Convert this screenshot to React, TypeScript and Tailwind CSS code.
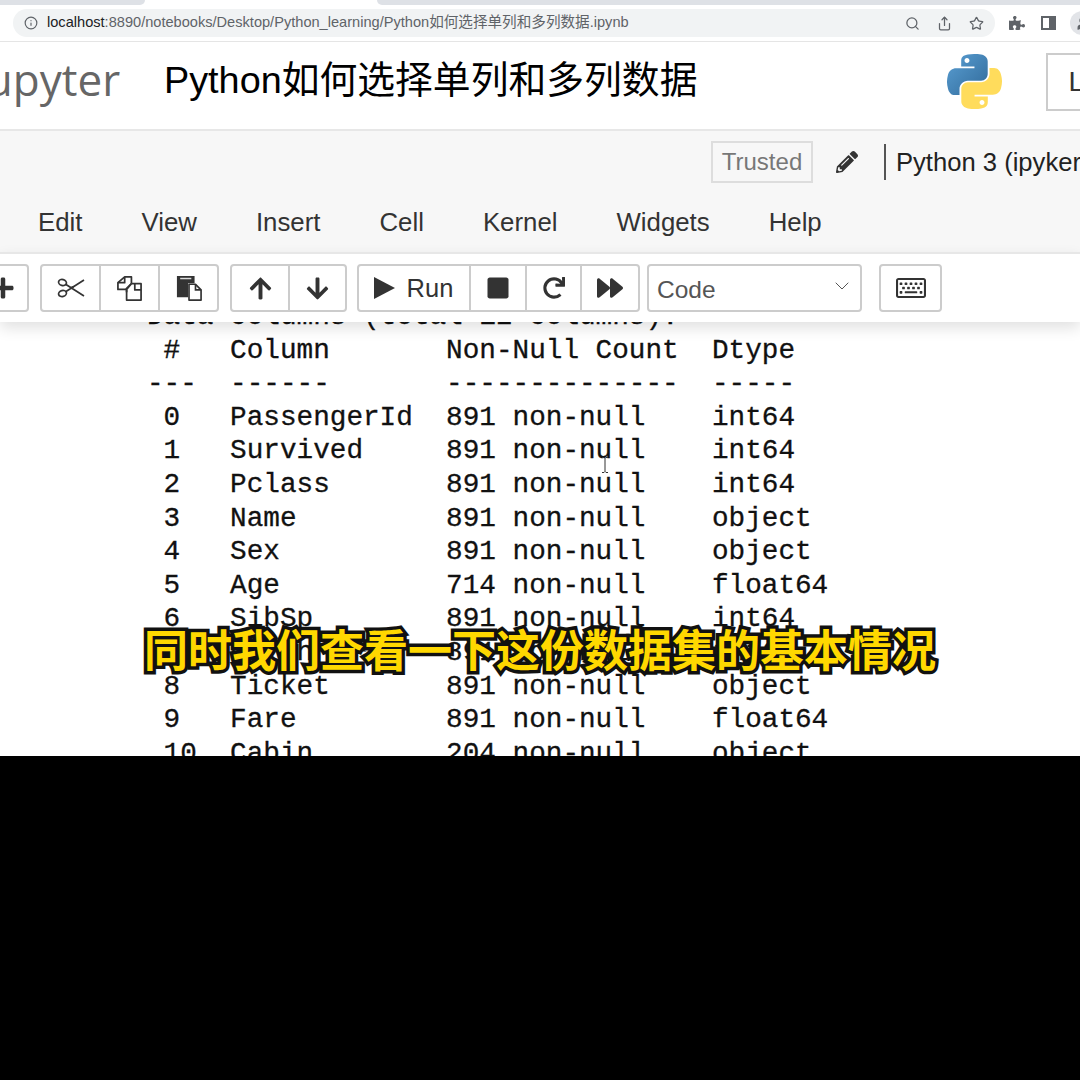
import { Info, Search, Share, Star, ChevronDown, User } from "lucide-react";
import {
  FaPlus,
  FaArrowUp,
  FaArrowDown,
  FaStop,
  FaRedo,
  FaForward,
  FaRegKeyboard,
  FaPuzzlePiece,
  FaPencilAlt,
} from "react-icons/fa";

const sans = "font-['Liberation_Sans','Noto_Sans_CJK_SC',sans-serif]";

const codeText = `Data columns (total 12 columns):
 #   Column       Non-Null Count  Dtype
---  ------       --------------  -----
 0   PassengerId  891 non-null    int64
 1   Survived     891 non-null    int64
 2   Pclass       891 non-null    int64
 3   Name         891 non-null    object
 4   Sex          891 non-null    object
 5   Age          714 non-null    float64
 6   SibSp        891 non-null    int64
 7   Parch        891 non-null    int64
 8   Ticket       891 non-null    object
 9   Fare         891 non-null    float64
 10  Cabin        204 non-null    object`;

const logoPath =
  "M54.9 0C50.3 0 46 .4 42.1 1.1 30.8 3.1 28.7 7.3 28.7 15v10.3h26.8v3.4H18.6c-7.8 0-14.6 4.7-16.7 13.6-2.5 10.2-2.6 16.6 0 27.2 1.9 7.9 6.4 13.6 14.2 13.6h9.2V70.8c0-8.8 7.7-16.6 16.8-16.6h26.8c7.5 0 13.4-6.1 13.4-13.6V15c0-7.3-6.1-12.7-13.4-13.9C64.3.3 59.5 0 54.9 0zM40.4 8.2c2.8 0 5 2.3 5 5.1 0 2.8-2.2 5.1-5 5.1-2.8 0-5-2.3-5-5.1 0-2.8 2.2-5.1 5-5.1z";

function PythonLogo() {
  return (
    <svg viewBox="0 0 111.2 111.2" className="w-[55px] h-[55px] shrink-0">
      <defs>
        <linearGradient id="py-blue" x1="0%" y1="0%" x2="100%" y2="100%">
          <stop offset="0%" stopColor="#5a9fd4" />
          <stop offset="100%" stopColor="#306998" />
        </linearGradient>
      </defs>
      <path d={logoPath} fill="url(#py-blue)" />
      <path d={logoPath} fill="#ffdc5c" transform="rotate(180 55.6 55.6)" />
    </svg>
  );
}

function ScissorsIcon() {
  return (
    <svg viewBox="0 0 28 20" className="w-[28px] h-[20px]" fill="none" stroke="#333" strokeWidth="1.7">
      <ellipse cx="5.5" cy="4.5" rx="4" ry="3" transform="rotate(15 5.5 4.5)" />
      <ellipse cx="5.5" cy="15.5" rx="4" ry="3" transform="rotate(-15 5.5 15.5)" />
      <path d="M9 6.5 27 18M9 13.5 27 2" />
      <path d="M13 9l5 -1.5-2 3z" fill="#333" stroke="none" />
    </svg>
  );
}

function CopyIcon() {
  return (
    <svg viewBox="0 0 28 28" className="w-[27px] h-[27px]" fill="none" stroke="#333" strokeWidth="1.8" strokeLinejoin="round">
      <path d="M9 2h7v7l-6 6H2V8z" />
      <path d="M9 2v6H2" />
      <path d="M16 9h10v17H11V15" fill="#fff" />
      <path d="M19.5 9v6.5H26M16 9l-5 6v3" />
    </svg>
  );
}

function PasteIcon() {
  return (
    <svg viewBox="0 0 28 28" className="w-[26px] h-[26px]">
      <path d="M1 1h19v8h-7v15H1z" fill="#333" />
      <rect x="4.5" y="3" width="12" height="1.6" fill="#ddd" />
      <path d="M14 10h7l6 6v11H14z" fill="#fff" stroke="#333" strokeWidth="1.8" strokeLinejoin="round" />
      <path d="M21 10v6h6" fill="none" stroke="#333" strokeWidth="1.8" />
    </svg>
  );
}

function ToolButton({ w, children, last }: { w: string; children: React.ReactNode; last?: boolean }) {
  return (
    <div className={`${w} h-full flex items-center justify-center shrink-0 text-[#333] ${last ? "" : "border-r-2 border-[#ccc]"}`}>
      {children}
    </div>
  );
}

function Group({ children, className }: { children: React.ReactNode; className?: string }) {
  return (
    <div className={`h-[48px] flex items-stretch shrink-0 border-2 border-[#ccc] rounded-[4px] bg-white ${className ?? ""}`}>
      {children}
    </div>
  );
}

export default function App() {
  return (
    <div className={`w-[1080px] h-[1080px] bg-black overflow-hidden ${sans}`}>
      <div className="relative h-[756px] bg-white overflow-hidden">
        {/* browser chrome */}
        <div className="h-[5px] flex bg-white">
          <div className="w-[145px] bg-[#dee1e6] rounded-br-[8px]" />
          <div className="w-[232px]" />
          <div className="flex-1 bg-[#dee1e6] rounded-bl-[8px]" />
        </div>
        <div className="h-[37px] flex items-center pl-[13px] border-b border-[#e5e5e5]">
          <div className="w-[982px] h-[28px] shrink-0 rounded-full bg-[#f1f3f4] flex items-center pl-[11px] pr-[11px]">
            <Info size={14} className="text-[#5f6368] mr-[9px] shrink-0" />
            <span className="text-[14.6px] text-[#5f6368] whitespace-nowrap">
              <span className="text-[#202124]">localhost</span>:8890/notebooks/Desktop/Python_learning/Python如何选择单列和多列数据.ipynb
            </span>
            <div className="ml-auto flex items-center gap-[17px] text-[#5f6368]">
              <Search size={15} />
              <Share size={15} />
              <Star size={15} />
            </div>
          </div>
          <FaPuzzlePiece size={16} className="ml-[14px] text-[#5f6368] shrink-0" />
          <div className="ml-[16px] w-[15px] h-[14px] border-2 border-[#5f6368] flex justify-end shrink-0">
            <div className="w-[5px] bg-[#5f6368]" />
          </div>
          <div className="ml-[14px] w-[24px] h-[24px] rounded-full bg-[#e2e4e8] flex items-center justify-center shrink-0">
            <User size={15} className="text-[#5f6368]" fill="#5f6368" />
          </div>
        </div>

        {/* notebook header */}
        <div className="h-[89px] flex items-center border-b-2 border-[#e7e7e7] bg-white">
          <span className="ml-[-26px] w-[190px] shrink-0 text-[44px] text-[#666] font-['Open_Sans',sans-serif] leading-none mt-[-14px]">
            Jupyter
          </span>
          <span className="text-[37.8px] text-black whitespace-nowrap leading-none mt-[-10px]">Python如何选择单列和多列数据</span>
          <div className="ml-[250px] shrink-0 mt-[-9px]">
            <PythonLogo />
          </div>
          <div className="ml-[44px] shrink-0 w-[80px] h-[58px] border-2 border-[#ccc] pl-[20px] flex items-center text-[28px] text-[#333] mt-[-7px]">
            Logout
          </div>
        </div>

        {/* kernel + menu */}
        <div className="h-[121px] bg-[#f7f7f7]">
          <div className="h-[62px] flex items-center pl-[711px]">
            <div className="w-[102px] h-[42px] shrink-0 border-2 border-[#ddd] flex items-center justify-center text-[24px] text-[#777] mt-[-1px]">
              Trusted
            </div>
            <FaPencilAlt size={22} className="ml-[23px] text-[#333] shrink-0" />
            <div className="ml-[26px] w-[2px] h-[36px] bg-[#555] shrink-0" />
            <span className="ml-[10px] text-[25.6px] text-[#222] whitespace-nowrap">Python 3 (ipykernel)</span>
          </div>
          <div className="h-[59px] flex items-center pl-[38px] gap-[59px] text-[25.8px] text-[#333]">
            <span>Edit</span>
            <span>View</span>
            <span>Insert</span>
            <span>Cell</span>
            <span>Kernel</span>
            <span>Widgets</span>
            <span>Help</span>
          </div>
        </div>

        {/* toolbar */}
        <div className="relative z-10 h-[70px] flex items-center bg-white border-t-2 border-[#e7e7e7] shadow-[0_6px_14px_rgba(0,0,0,0.12)]">
          <Group className="ml-[-40px] w-[69px] mr-[11px]">
            <ToolButton w="w-full" last>
              <FaPlus size={24} className="ml-[16px]" />
            </ToolButton>
          </Group>
          <Group className="mr-[11px]">
            <ToolButton w="w-[59px]">
              <ScissorsIcon />
            </ToolButton>
            <ToolButton w="w-[59px]">
              <CopyIcon />
            </ToolButton>
            <ToolButton w="w-[57px]" last>
              <PasteIcon />
            </ToolButton>
          </Group>
          <Group className="mr-[10px]">
            <ToolButton w="w-[58px]">
              <FaArrowUp size={25} />
            </ToolButton>
            <ToolButton w="w-[55px]" last>
              <FaArrowDown size={25} />
            </ToolButton>
          </Group>
          <Group className="mr-[7px]">
            <ToolButton w="w-[112px]">
              <div className="flex items-center gap-[12px] text-[25.5px] ml-[-1px]">
                <svg viewBox="0 0 21 22" className="w-[21px] h-[22px]" fill="#333">
                  <path d="M0 0 21 11 0 22z" />
                </svg>
                <span>Run</span>
              </div>
            </ToolButton>
            <ToolButton w="w-[56px]">
              <FaStop size={24} />
            </ToolButton>
            <ToolButton w="w-[55px]">
              <FaRedo size={22} />
            </ToolButton>
            <ToolButton w="w-[56px]" last>
              <FaForward size={26} />
            </ToolButton>
          </Group>
          <Group className="w-[215px] mr-[17px] pl-[8px] pr-[6px] text-[24.5px] text-[#555]">
            <span className="self-center mt-[4px]">Code</span>
            <ChevronDown size={24} strokeWidth={1} className="ml-auto self-center text-[#555] mt-[-4px]" />
          </Group>
          <Group className="w-[63px] justify-center">
            <FaRegKeyboard size={30} className="self-center text-[#333]" />
          </Group>
        </div>

        <pre className="mt-[-22px] ml-[147px] font-['Liberation_Mono',monospace] text-[27.7px] leading-[33.6px] text-[#111] [-webkit-text-stroke:0.3px_#111]">
          {codeText}
        </pre>

        {/* I-beam cursor */}
        <svg viewBox="0 0 8 16" className="absolute left-[601px] top-[457px] w-[8px] h-[16px]" fill="none" stroke="#333" strokeWidth="1">
          <path d="M1 .5h2l1 1 1-1h2M4 1.5v13M1 15.5h2l1-1 1 1h2" />
        </svg>

        {/* subtitle */}
        <div className="absolute z-20 left-0 right-0 top-[620px] text-center text-[44px] leading-[56px] font-bold text-[#ffd800] font-['Noto_Sans_CJK_SC',sans-serif] [-webkit-text-stroke:7px_#111] [paint-order:stroke_fill]">
          同时我们查看一下这份数据集的基本情况
        </div>
      </div>
    </div>
  );
}
